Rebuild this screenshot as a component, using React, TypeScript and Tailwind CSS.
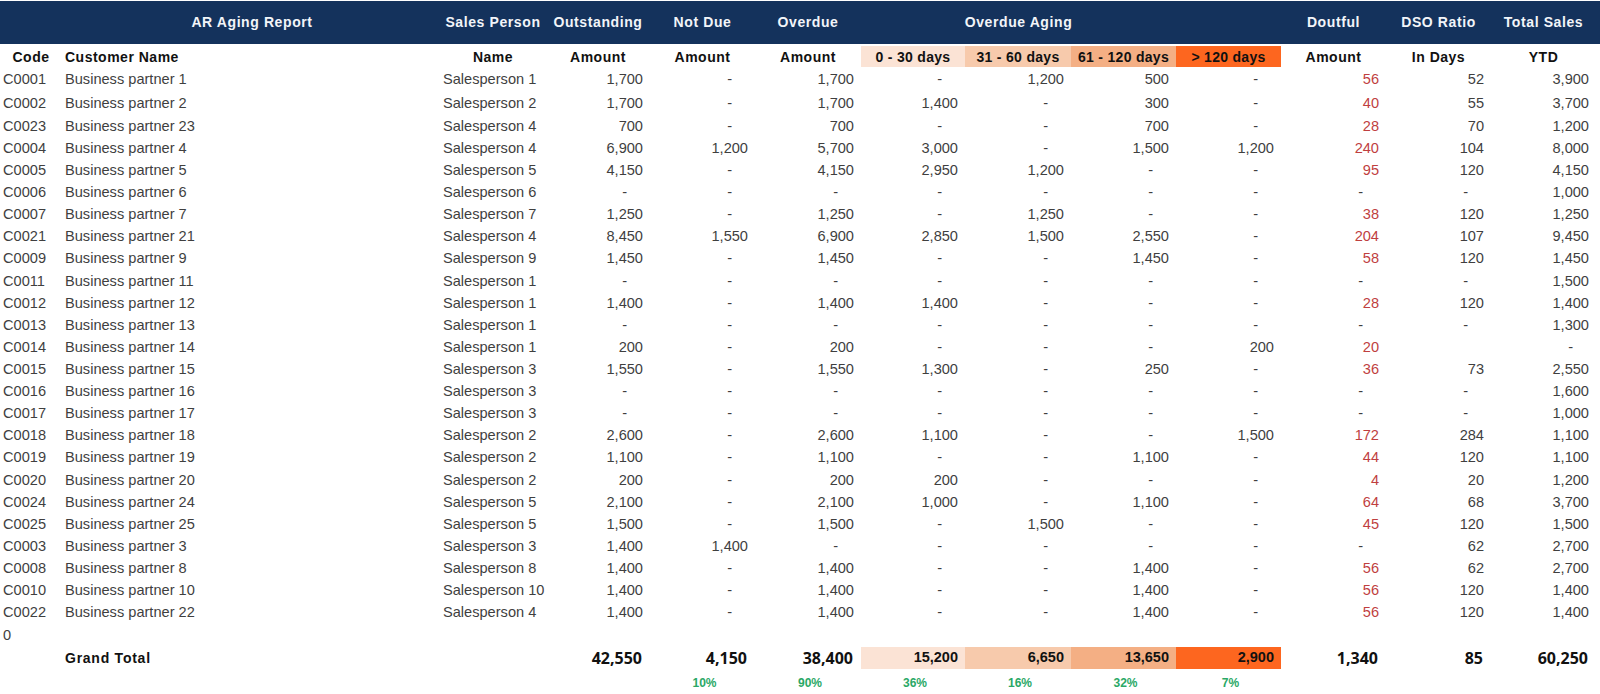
import React from 'react'

const COLS = 'grid grid-cols-[62px_378px_106px_104px_105px_106px_104px_106px_105px_105px_105px_105px_105px]'
const ARIAL = "font-['Liberation_Sans',Arial,sans-serif]"

// code, customer, salesperson, then the 10 numeric columns
type Row = [string, string, string, string, string, string, string, string, string, string, string, string, string]

const rows: Row[] = [
  ['C0001', 'Business partner 1', 'Salesperson 1', '1,700', '-', '1,700', '-', '1,200', '500', '-', '56', '52', '3,900'],
  ['C0002', 'Business partner 2', 'Salesperson 2', '1,700', '-', '1,700', '1,400', '-', '300', '-', '40', '55', '3,700'],
  ['C0023', 'Business partner 23', 'Salesperson 4', '700', '-', '700', '-', '-', '700', '-', '28', '70', '1,200'],
  ['C0004', 'Business partner 4', 'Salesperson 4', '6,900', '1,200', '5,700', '3,000', '-', '1,500', '1,200', '240', '104', '8,000'],
  ['C0005', 'Business partner 5', 'Salesperson 5', '4,150', '-', '4,150', '2,950', '1,200', '-', '-', '95', '120', '4,150'],
  ['C0006', 'Business partner 6', 'Salesperson 6', '-', '-', '-', '-', '-', '-', '-', '-', '-', '1,000'],
  ['C0007', 'Business partner 7', 'Salesperson 7', '1,250', '-', '1,250', '-', '1,250', '-', '-', '38', '120', '1,250'],
  ['C0021', 'Business partner 21', 'Salesperson 4', '8,450', '1,550', '6,900', '2,850', '1,500', '2,550', '-', '204', '107', '9,450'],
  ['C0009', 'Business partner 9', 'Salesperson 9', '1,450', '-', '1,450', '-', '-', '1,450', '-', '58', '120', '1,450'],
  ['C0011', 'Business partner 11', 'Salesperson 1', '-', '-', '-', '-', '-', '-', '-', '-', '-', '1,500'],
  ['C0012', 'Business partner 12', 'Salesperson 1', '1,400', '-', '1,400', '1,400', '-', '-', '-', '28', '120', '1,400'],
  ['C0013', 'Business partner 13', 'Salesperson 1', '-', '-', '-', '-', '-', '-', '-', '-', '-', '1,300'],
  ['C0014', 'Business partner 14', 'Salesperson 1', '200', '-', '200', '-', '-', '-', '200', '20', '', '-'],
  ['C0015', 'Business partner 15', 'Salesperson 3', '1,550', '-', '1,550', '1,300', '-', '250', '-', '36', '73', '2,550'],
  ['C0016', 'Business partner 16', 'Salesperson 3', '-', '-', '-', '-', '-', '-', '-', '-', '-', '1,600'],
  ['C0017', 'Business partner 17', 'Salesperson 3', '-', '-', '-', '-', '-', '-', '-', '-', '-', '1,000'],
  ['C0018', 'Business partner 18', 'Salesperson 2', '2,600', '-', '2,600', '1,100', '-', '-', '1,500', '172', '284', '1,100'],
  ['C0019', 'Business partner 19', 'Salesperson 2', '1,100', '-', '1,100', '-', '-', '1,100', '-', '44', '120', '1,100'],
  ['C0020', 'Business partner 20', 'Salesperson 2', '200', '-', '200', '200', '-', '-', '-', '4', '20', '1,200'],
  ['C0024', 'Business partner 24', 'Salesperson 5', '2,100', '-', '2,100', '1,000', '-', '1,100', '-', '64', '68', '3,700'],
  ['C0025', 'Business partner 25', 'Salesperson 5', '1,500', '-', '1,500', '-', '1,500', '-', '-', '45', '120', '1,500'],
  ['C0003', 'Business partner 3', 'Salesperson 3', '1,400', '1,400', '-', '-', '-', '-', '-', '-', '62', '2,700'],
  ['C0008', 'Business partner 8', 'Salesperson 8', '1,400', '-', '1,400', '-', '-', '1,400', '-', '56', '62', '2,700'],
  ['C0010', 'Business partner 10', 'Salesperson 10', '1,400', '-', '1,400', '-', '-', '1,400', '-', '56', '120', '1,400'],
  ['C0022', 'Business partner 22', 'Salesperson 4', '1,400', '-', '1,400', '-', '-', '1,400', '-', '56', '120', '1,400'],
]

const AGING_BG = ['bg-[#fbe3d5]', 'bg-[#f7caac]', 'bg-[#f4af84]', 'bg-[#fd661f]']
const AGING_LABELS = ['0 - 30 days', '31 - 60 days', '61 - 120 days', '> 120 days']
const NUMBERS_HEAD = ['Amount', 'Amount', 'Amount']
const GRAND_AGING = ['15,200', '6,650', '13,650', '2,900']
const PERCENTS = ['10%', '90%', '36%', '16%', '32%', '7%']

// dash cells sit further in than figures, roughly the middle of the Excel accounting format
const NumCell: React.FC<{ value: string; red?: boolean }> = ({ value, red }) => (
  <div className={`flex items-center justify-end ${value === '-' ? 'pr-[23px]' : 'pr-[7px]'} ${red && value !== '-' ? 'text-[#bf3f3f]' : ''}`}>
    {value}
  </div>
)

const DataRow: React.FC<{ row: Row; size: string }> = ({ row, size }) => {
  const [code, customer, person, ...nums] = row
  return (
    <div className={`${COLS} ${size} text-[14.6px] leading-none text-[#3f3f3f]`}>
      <div className="flex items-center pl-[3px]">{code}</div>
      <div className="flex items-center pl-[3px]">{customer}</div>
      <div className="flex items-center pl-[3px]">{person}</div>
      {nums.map((n, i) => (
        <NumCell key={i} value={n} red={i === 7} />
      ))}
    </div>
  )
}

// the first two rows are a little taller than the rest in the sheet
const rowSize = (i: number) => {
  if (i === 0) return 'h-[24px] pb-[2px]'
  if (i === 1) return 'h-[23px]'
  return 'h-[22.12px]'
}

export default function App() {
  return (
    <div className={`h-[694px] w-[1600px] overflow-hidden bg-white pt-px ${ARIAL}`}>
      {/* navy title band */}
      <div className={`${COLS} h-[43px] items-center bg-[#14325c] text-center text-[14px] font-bold tracking-[0.6px] text-[#f2f5f9]`}>
        <div className="col-span-2 pl-[64px]">AR Aging Report</div>
        <div>Sales Person</div>
        <div>Outstanding</div>
        <div>Not Due</div>
        <div>Overdue</div>
        <div className="col-span-3">Overdue Aging</div>
        <div />
        <div>Doutful</div>
        <div>DSO Ratio</div>
        <div>Total Sales</div>
      </div>

      {/* column sub headers */}
      <div className={`${COLS} h-[24px] pt-px text-center text-[14px] font-bold leading-none tracking-[0.5px] text-[#111]`}>
        <div className="flex items-center justify-center">Code</div>
        <div className="flex items-center pl-[3px] text-left">Customer Name</div>
        <div className="flex items-center justify-center">Name</div>
        {NUMBERS_HEAD.map((h, i) => (
          <div key={i} className="flex items-center justify-center">{h}</div>
        ))}
        {AGING_LABELS.map((h, i) => (
          <div key={h} className={`my-[1px] flex items-center justify-center tracking-[0.3px] ${AGING_BG[i]}`}>{h}</div>
        ))}
        <div className="flex items-center justify-center">Amount</div>
        <div className="flex items-center justify-center">In Days</div>
        <div className="flex items-center justify-center">YTD</div>
      </div>

      {rows.map((row, i) => (
        <DataRow key={row[0]} row={row} size={rowSize(i)} />
      ))}

      <div className="flex h-[22.12px] items-center pl-[3px] pt-[2px] text-[14.6px] leading-none text-[#3f3f3f]">0</div>

      {/* grand total */}
      <div className={`${COLS} h-[24px] text-[14.5px] font-bold leading-none text-[#111]`}>
        <div />
        <div className="flex items-center pl-[3px] text-[14px] tracking-[0.75px]">Grand Total</div>
        <div />
        {['42,550', '4,150', '38,400'].map(v => (
          <div key={v} className="flex items-center justify-end pr-[8px] font-['Open_Sans',sans-serif] text-[16px]">{v}</div>
        ))}
        {GRAND_AGING.map((v, i) => (
          <div key={v} className={`my-px flex items-center justify-end pr-[7px] ${AGING_BG[i]}`}>{v}</div>
        ))}
        {['1,340', '85', '60,250'].map(v => (
          <div key={v} className="flex items-center justify-end pr-[8px] font-['Open_Sans',sans-serif] text-[16px]">{v}</div>
        ))}
      </div>

      {/* share of outstanding */}
      <div className={`${COLS} h-[22px] pt-[5px] text-[12px] font-bold leading-none text-[#2aa866]`}>
        <div className="col-span-4" />
        {PERCENTS.map(p => (
          <div key={p} className="flex items-center justify-center pl-[4px]">{p}</div>
        ))}
      </div>
    </div>
  )
}
